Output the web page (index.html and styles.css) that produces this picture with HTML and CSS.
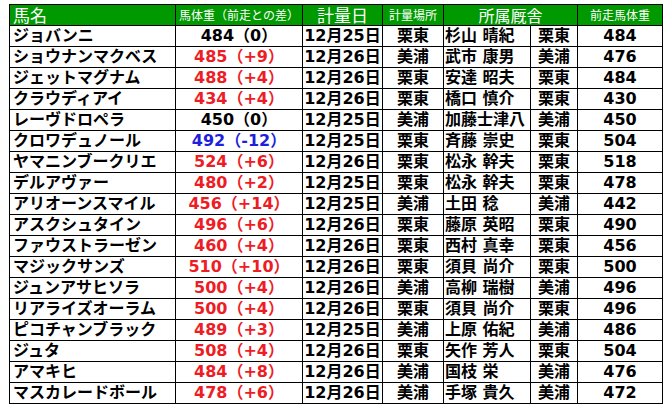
FILE: index.html
```html
<!DOCTYPE html>
<html lang="ja">
<head>
<meta charset="utf-8">
<title>馬体重</title>
<link rel="stylesheet" href="styles.css">
</head>
<body>
<div class="wrap">
<table class="weights">
<colgroup>
<col class="c-name"><col class="c-wt"><col class="c-date"><col class="c-place"><col class="c-trainer"><col class="c-stable"><col class="c-prev">
</colgroup>
<thead>
<tr>
<th class="h-name">馬名</th>
<th class="h-small">馬体重（前走との差）</th>
<th class="h-big">計量日</th>
<th class="h-small">計量場所</th>
<th class="h-mid" colspan="2">所属厩舎</th>
<th class="h-small">前走馬体重</th>
</tr>
</thead>
<tbody>
<tr><td class="name">ジョバンニ</td><td class="wt">484（0）</td><td class="ctr">12月25日</td><td class="ctr">栗東</td><td class="trainer">杉山 晴紀</td><td class="ctr">栗東</td><td class="ctr">484</td></tr>
<tr><td class="name">ショウナンマクベス</td><td class="wt up">485（+9）</td><td class="ctr">12月26日</td><td class="ctr">美浦</td><td class="trainer">武市 康男</td><td class="ctr">美浦</td><td class="ctr">476</td></tr>
<tr><td class="name">ジェットマグナム</td><td class="wt up">488（+4）</td><td class="ctr">12月26日</td><td class="ctr">栗東</td><td class="trainer">安達 昭夫</td><td class="ctr">栗東</td><td class="ctr">484</td></tr>
<tr><td class="name">クラウディアイ</td><td class="wt up">434（+4）</td><td class="ctr">12月26日</td><td class="ctr">栗東</td><td class="trainer">橋口 慎介</td><td class="ctr">栗東</td><td class="ctr">430</td></tr>
<tr><td class="name">レーヴドロペラ</td><td class="wt">450（0）</td><td class="ctr">12月25日</td><td class="ctr">美浦</td><td class="trainer">加藤士津八</td><td class="ctr">美浦</td><td class="ctr">450</td></tr>
<tr><td class="name">クロワデュノール</td><td class="wt down">492（-12）</td><td class="ctr">12月25日</td><td class="ctr">栗東</td><td class="trainer">斉藤 崇史</td><td class="ctr">栗東</td><td class="ctr">504</td></tr>
<tr><td class="name">ヤマニンブークリエ</td><td class="wt up">524（+6）</td><td class="ctr">12月26日</td><td class="ctr">栗東</td><td class="trainer">松永 幹夫</td><td class="ctr">栗東</td><td class="ctr">518</td></tr>
<tr><td class="name">デルアヴァー</td><td class="wt up">480（+2）</td><td class="ctr">12月25日</td><td class="ctr">栗東</td><td class="trainer">松永 幹夫</td><td class="ctr">栗東</td><td class="ctr">478</td></tr>
<tr><td class="name">アリオーンスマイル</td><td class="wt up">456（+14）</td><td class="ctr">12月25日</td><td class="ctr">美浦</td><td class="trainer">土田 稔</td><td class="ctr">美浦</td><td class="ctr">442</td></tr>
<tr><td class="name">アスクシュタイン</td><td class="wt up">496（+6）</td><td class="ctr">12月26日</td><td class="ctr">栗東</td><td class="trainer">藤原 英昭</td><td class="ctr">栗東</td><td class="ctr">490</td></tr>
<tr><td class="name">ファウストラーゼン</td><td class="wt up">460（+4）</td><td class="ctr">12月26日</td><td class="ctr">栗東</td><td class="trainer">西村 真幸</td><td class="ctr">栗東</td><td class="ctr">456</td></tr>
<tr><td class="name">マジックサンズ</td><td class="wt up">510（+10）</td><td class="ctr">12月26日</td><td class="ctr">栗東</td><td class="trainer">須貝 尚介</td><td class="ctr">栗東</td><td class="ctr">500</td></tr>
<tr><td class="name">ジュンアサヒソラ</td><td class="wt up">500（+4）</td><td class="ctr">12月26日</td><td class="ctr">美浦</td><td class="trainer">高柳 瑞樹</td><td class="ctr">美浦</td><td class="ctr">496</td></tr>
<tr><td class="name">リアライズオーラム</td><td class="wt up">500（+4）</td><td class="ctr">12月26日</td><td class="ctr">栗東</td><td class="trainer">須貝 尚介</td><td class="ctr">栗東</td><td class="ctr">496</td></tr>
<tr><td class="name">ピコチャンブラック</td><td class="wt up">489（+3）</td><td class="ctr">12月25日</td><td class="ctr">美浦</td><td class="trainer">上原 佑紀</td><td class="ctr">美浦</td><td class="ctr">486</td></tr>
<tr><td class="name">ジュタ</td><td class="wt up">508（+4）</td><td class="ctr">12月26日</td><td class="ctr">栗東</td><td class="trainer">矢作 芳人</td><td class="ctr">栗東</td><td class="ctr">504</td></tr>
<tr><td class="name">アマキヒ</td><td class="wt up">484（+8）</td><td class="ctr">12月26日</td><td class="ctr">美浦</td><td class="trainer">国枝 栄</td><td class="ctr">美浦</td><td class="ctr">476</td></tr>
<tr><td class="name">マスカレードボール</td><td class="wt up">478（+6）</td><td class="ctr">12月26日</td><td class="ctr">美浦</td><td class="trainer">手塚 貴久</td><td class="ctr">美浦</td><td class="ctr">472</td></tr>
</tbody>
</table>
</div>
</body>
</html>
```
FILE: styles.css
```css
html, body {
  margin: 0;
  padding: 0;
  background: #ffffff;
}

.wrap {
  padding: 4px 0 0 9px;
}

.weights {
  table-layout: fixed;
  width: 654px;
  border-collapse: separate;
  border-spacing: 1px;
  background: #000000;
  font-family: "DejaVu Sans", "Noto Sans CJK JP", sans-serif;
  font-weight: 700;
  font-size: 16px;
  color: #000000;
}

.c-name { width: 165px; }
.c-wt { width: 126px; }
.c-date { width: 79px; }
.c-place { width: 60px; }
.c-trainer { width: 86px; }
.c-stable { width: 46px; }
.c-prev { width: 84px; }

.weights th,
.weights td {
  height: 20px;
  padding: 0;
  line-height: 20px;
  white-space: nowrap;
  box-sizing: border-box;
}

.weights th {
  background: #009900;
  color: #ffffff;
  font-family: "Noto Sans CJK JP", sans-serif;
  font-weight: 400;
  text-align: center;
  line-height: 18px;
}

.weights td {
  background: #ffffff;
}

.h-name {
  font-size: 17px;
  text-align: left !important;
  padding-left: 3px !important;
}

.h-big { font-size: 17px; }
.h-mid { font-size: 16px; }
.h-small { font-size: 12px; }

.name {
  text-align: left;
  padding-left: 3px !important;
}

.trainer {
  text-align: left;
  padding-left: 1px !important;
}

.ctr,
.wt {
  text-align: center;
}

.up { color: #ee1c24; }
.down { color: #1f1fdd; }
```
